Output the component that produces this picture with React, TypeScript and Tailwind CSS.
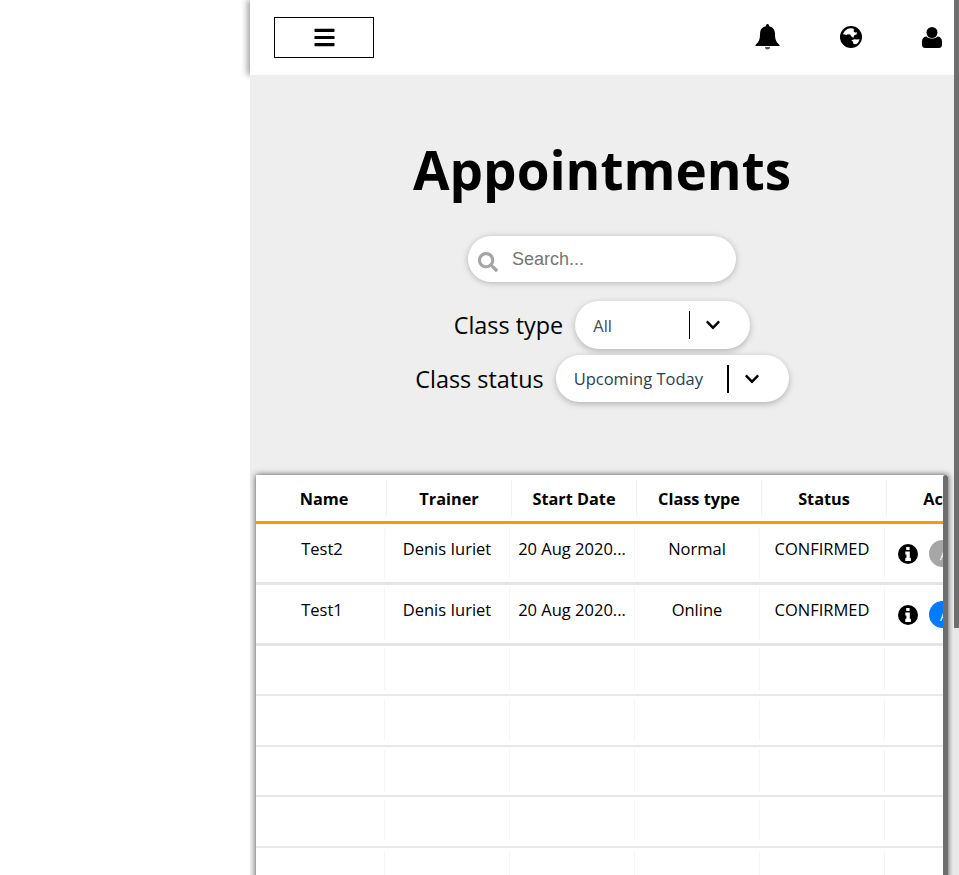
import React from 'react';
import { FaBars, FaChevronDown, FaSearch } from 'react-icons/fa';

const font = "font-['Open_Sans',sans-serif]";

const headers = ['Name', 'Trainer', 'Start Date', 'Class type', 'Status', 'Actions'];

type Row = { name: string; type: string; accent: string };

const rows: Row[] = [
  { name: 'Test2', type: 'Normal', accent: 'bg-[#a6a6a6]' },
  { name: 'Test1', type: 'Online', accent: 'bg-[#007bff]' },
];

const emptyRowHeights = ['h-[50px]', 'h-[51px]', 'h-[50px]', 'h-[51px]', 'h-[50px]'];

function InfoIcon() {
  return (
    <svg viewBox="0 0 20 20" width="20" height="20" className="shrink-0">
      <circle cx="10" cy="10" r="10" fill="#000" />
      <path d="M8.2 2.900h3.400v3H8.200zM7.300 7.400h4.500v6.300h1.100v3.200H7.300v-3.200h1.100v-3.100H7.300z" fill="#fff" />
    </svg>
  );
}

function BellIcon() {
  return (
    <svg viewBox="0 0 24 26" width="25" height="26" className="mr-[60px] mt-[-2px]">
      <path d="M12 0a1.600 1.600 0 0 1 1.600 1.600v.6C17.500 3 19.500 6 19.500 10c0 5 1 8 4.500 11v1H0v-1c3.500-3 4.500-6 4.500-11 0-4 2-7 5.900-7.800v-.6A1.600 1.600 0 0 1 12 0z" fill="#000" />
      <path d="M9.500 23a2.500 2.500 0 0 0 5 0z" fill="#555" />
    </svg>
  );
}

function GlobeIcon() {
  return (
    <svg viewBox="0 0 22 22" width="22" height="22" className="mr-[60px] mt-[-1px]">
      <circle cx="11" cy="11" r="11" fill="#000" />
      <path d="M3.200 8.200C4 5 7 2.400 10.500 2.200l2.600.4 1.200 1.500-1 1 2 1.600 1.300-.6.3 2.200-2.600 1-1 2.400-2.200-1.400-.8-1.800-2.600-.3-1.200.9-1.500-.6-.5.1z" fill="#fff" />
      <path d="M11.400 14.200l3-1 2 .3 3.200-.3c-.5 2.200-1.800 4-3.600 5.100l-2.400-.4-.6-2.200z" fill="#fff" />
    </svg>
  );
}

function UserIcon() {
  return (
    <svg viewBox="0 0 20 21" width="20" height="21" className="mr-[17px] mt-[-1px]">
      <circle cx="10" cy="5.500" r="5.500" fill="#000" />
      <path d="M0 18v-3.500c0-3 2-5 4.500-5 1.500 1.500 3.500 2 5.500 2s4-.5 5.500-2c2.500 0 4.500 2 4.500 5V18c0 2-1.500 3-3 3H3c-1.500 0-3-1-3-3z" fill="#000" />
    </svg>
  );
}

function Cell({ children, last }: { children?: React.ReactNode; last?: boolean }) {
  return (
    <div className={`flex h-full w-[125px] shrink-0 justify-center whitespace-nowrap border-[#f5f5f5] px-[5px] pt-[10px] ${last ? '' : 'border-r'}`}>
      {children}
    </div>
  );
}

function Select({ value, label, width, tall }: { value: string; label: string; width: string; tall?: boolean }) {
  return (
    <div className="flex items-center justify-center gap-[12px]">
      <span className="text-[23.4px] leading-[32px] text-black">{label}</span>
      <div className={`flex ${width} ${tall ? 'h-[47px]' : 'h-[48px]'} items-center rounded-full bg-white pl-[18px] shadow-[0_2px_6px_rgba(0,0,0,0.25)]`}>
        <span className={`flex-1 whitespace-nowrap pt-[2px] text-[16.5px] ${tall ? 'text-[#2c3e50]' : 'text-[#4a4a4a]'}`}>{value}</span>
        <span className={`h-[28px] bg-black ${tall ? 'w-[2px]' : 'w-px'}`} />
        <span className="flex w-[60px] pl-[15px]">
          <FaChevronDown size={16} className="text-black" />
        </span>
      </div>
    </div>
  );
}

export default function App() {
  return (
    <div className={`relative flex h-[875px] w-[959px] overflow-hidden bg-white ${font}`}>
      <div className="w-[250px] shrink-0" />
      <main className="flex min-w-0 flex-1 flex-col">
        <header className="flex h-[75px] shrink-0 items-center bg-white pl-[24px] shadow-[-3px_0_6px_rgba(0,0,0,0.35)]">
          <button className="flex h-[41px] w-[100px] items-center justify-center border border-black bg-white">
            <FaBars size={23} className="text-black" />
          </button>
          <div className="ml-auto flex items-center">
            <BellIcon />
            <GlobeIcon />
            <UserIcon />
          </div>
        </header>

        <div className="flex min-h-0 flex-1 flex-col bg-[#eeeeee]">
          <div className="pr-[5px]">
            <h1 className="mt-[56px] text-center text-[53px] font-bold leading-[78px] text-black">Appointments</h1>

            <div className="mt-[27px] flex justify-center">
              <div className="flex h-[46px] w-[268px] items-center rounded-full bg-white pl-[10px] font-['Liberation_Sans',sans-serif] shadow-[0_1px_6px_rgba(0,0,0,0.25)]">
                <FaSearch size={20} className="mt-[5px] text-[#a5a5a5]" />
                <span className="ml-[14px] text-[18px] text-[#757575]">Search...</span>
              </div>
            </div>

            <div className="mt-[19px]">
              <Select label="Class type" value="All" width="w-[175px]" />
            </div>
            <div className="mt-[6px]">
              <Select label="Class status" value="Upcoming Today" width="w-[233px]" tall />
            </div>
          </div>

          <div className="ml-[6px] mt-[73px] flex w-[692px] flex-1 shadow-[0_0_6px_rgba(0,0,0,0.7)]">
            <div className="w-[687px] overflow-hidden bg-white text-black">
              <div className="flex h-[49px] border-b-[3px] border-[#ff9800] pl-[6px] pt-[5px]">
                {headers.map((h, i) => (
                  <div key={h} className={`flex h-[36px] w-[125px] shrink-0 items-center justify-center pt-[2px] text-[16.3px] font-bold ${i < 5 ? 'border-r border-[#f0f0f0]' : 'pl-[8px]'}`}>
                    {h}
                  </div>
                ))}
              </div>

              {rows.map((r) => (
                <div key={r.name} className="flex h-[61px] items-start border-b-[3px] border-[#e5e5e5] pl-[4px] pt-[3px] text-[16.5px] leading-[24px]">
                  <div className="flex h-[52px]">
                    <Cell>{r.name}</Cell>
                    <Cell>Denis Iuriet</Cell>
                    <Cell>20 Aug 2020...</Cell>
                    <Cell>{r.type}</Cell>
                    <Cell>CONFIRMED</Cell>
                    <Cell last>
                      <div className="mr-auto flex h-[33px] items-center gap-[11px] pl-[8px]">
                        <InfoIcon />
                        <span className={`flex h-[27px] w-[60px] shrink-0 items-center rounded-full pl-[11px] pt-[4px] text-[12px] text-white ${r.accent}`}>A</span>
                      </div>
                    </Cell>
                  </div>
                </div>
              ))}

              {emptyRowHeights.map((h, i) => (
                <div key={i} className={`flex ${h} items-start border-b-2 border-[#e8e8e8] pl-[4px] pt-[3px]`}>
                  <div className="flex h-[41px]">
                    <Cell />
                    <Cell />
                    <Cell />
                    <Cell />
                    <Cell />
                    <Cell last />
                  </div>
                </div>
              ))}
            </div>
            <div className="w-[5px] shrink-0 rounded-t-[3px] bg-[#6e6e6e]" />
          </div>
        </div>
      </main>
      {/* page scrollbar */}
      <div className="absolute right-0 top-0 h-full w-[5px] bg-[#e8e8e8]">
        <div className="h-[628px] bg-[#6e6e6e]" />
      </div>
    </div>
  );
}
